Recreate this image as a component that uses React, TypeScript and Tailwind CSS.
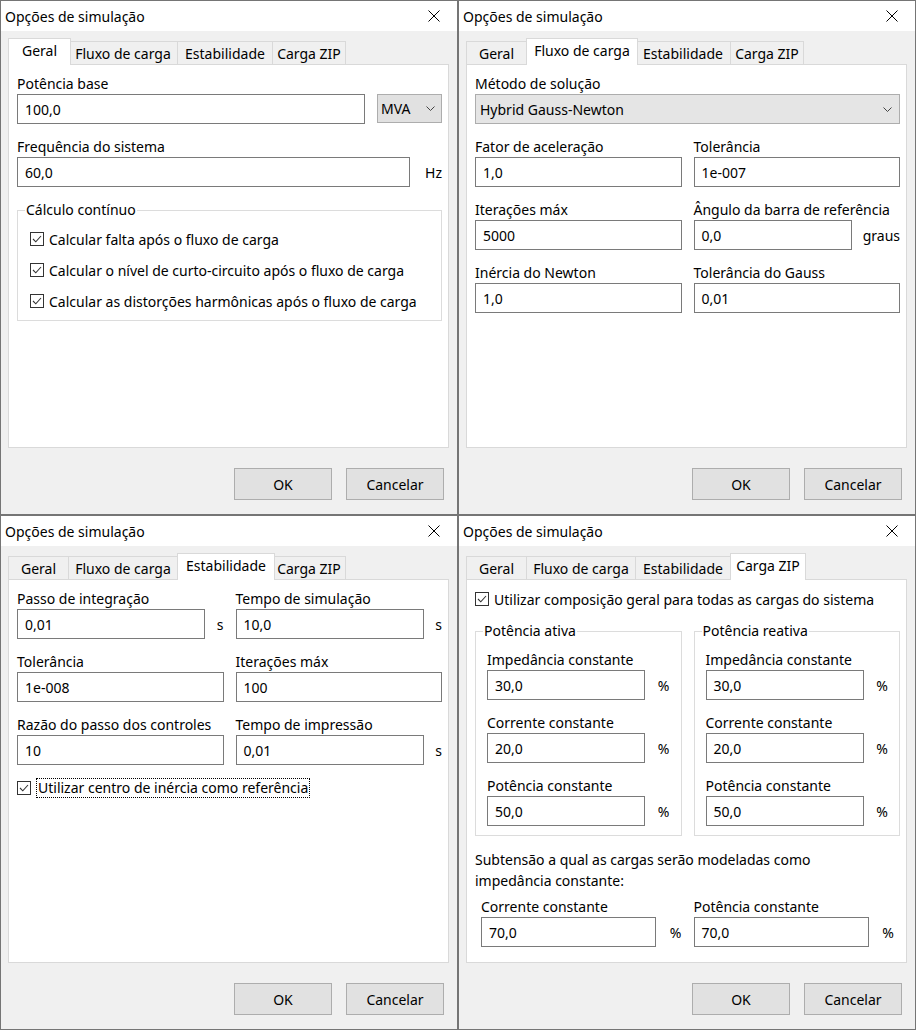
import type { ReactNode } from 'react';

const tabs = [
  { id: 'geral', label: 'Geral', w: 'w-[61px]', wSel: 'w-[63px]' },
  { id: 'fluxo', label: 'Fluxo de carga', w: 'w-[110px]', wSel: 'w-[112px]' },
  { id: 'estab', label: 'Estabilidade', w: 'w-[96px]', wSel: 'w-[98px]' },
  { id: 'zip', label: 'Carga ZIP', w: 'w-[74px]', wSel: 'w-[76px]' },
];

function CloseIcon() {
  return (
    <svg width="12" height="12" viewBox="0 0 12 12" className="block">
      <path d="M0.5 0.5 L11.5 11.5 M11.5 0.5 L0.5 11.5" stroke="#000" strokeWidth="1" fill="none" />
    </svg>
  );
}

function Chevron() {
  return (
    <svg width="9" height="5" viewBox="0 0 9 5" className="block">
      <path d="M0.5 0.5 L4.5 4.5 L8.5 0.5" stroke="#444" strokeWidth="1" fill="none" />
    </svg>
  );
}

function CheckBox({ label, focused = false }: { label: string; focused?: boolean }) {
  return (
    <div className="flex h-[20px] items-center">
      <svg width="14" height="14" viewBox="0 0 14 14" className="block shrink-0">
        <rect x="0.5" y="0.5" width="13" height="13" fill="#fff" stroke="#333" />
        <path d="M3 7 L5.8 9.8 L11 4" stroke="#333" strokeWidth="1.1" fill="none" />
      </svg>
      <span className={focused ? 'ml-[5px] border border-dotted border-black px-[1px] leading-[18px]' : 'ml-[5px]'}>
        {label}
      </span>
    </div>
  );
}

function Input({ value, w }: { value: string; w?: string }) {
  return (
    <div className={`flex h-[30px] items-center border border-[#7a7a7a] bg-white pl-[7px] ${w ?? 'w-full'}`}>
      {value}
    </div>
  );
}

// label on top, box below, optional unit on the right
function Field({ label, value, w, unit }: { label: string; value: string; w?: string; unit?: string }) {
  return (
    <div>
      <div className="h-[20px] leading-[20px]">{label}</div>
      <div className="flex items-center justify-between">
        <Input value={value} w={w} />
        {unit && <span>{unit}</span>}
      </div>
    </div>
  );
}

function Group({ title, children, className }: { title: string; children: ReactNode; className?: string }) {
  return (
    <fieldset className="border border-[#dcdcdc]">
      <legend className="ml-[7px] px-[1px] leading-[20px]">{title}</legend>
      <div className={className}>{children}</div>
    </fieldset>
  );
}

function Window({ tab, children }: { tab: string; children: ReactNode }) {
  return (
    <div className="flex h-[515px] w-[458px] flex-col border border-[#757575] bg-[#f0f0f0]">
      <div className="flex h-[30px] shrink-0 items-center justify-between bg-white pl-[4px]">
        <span>Opções de simulação</span>
        <div className="flex h-[30px] w-[46px] items-center justify-center">
          <CloseIcon />
        </div>
      </div>

      <div className="px-[7px] pt-[7px]">
        {/* Tabs */}
        <div className="flex h-[26px] items-end">
          {tabs.map((t, i) =>
            t.id === tab ? (
              <div
                key={t.id}
                className={`relative z-10 -mb-px -mr-[2px] flex h-[27px] items-start justify-center border border-b-0 border-[#d9d9d9] bg-white pt-[1px] ${t.wSel} ${i > 0 ? '-ml-px' : ''}`}
              >
                {t.label}
              </div>
            ) : (
              <div
                key={t.id}
                className={`flex h-[23px] items-center justify-center border border-b-0 border-[#d9d9d9] bg-[#f0f0f0] pt-[1px] ${t.w} ${i > 0 ? '-ml-px' : ''}`}
              >
                {t.label}
              </div>
            ),
          )}
        </div>
        <div className="h-[384px] w-[441px] border border-[#d9d9d9] bg-white pl-[8px] pr-[6px] pt-[9px]">
          {children}
        </div>
      </div>

      <div className="flex justify-end gap-[14px] pr-[13px] pt-[20px]">
        <div className="flex h-[32px] w-[98px] items-center justify-center border border-[#adadad] bg-[#e1e1e1]">OK</div>
        <div className="flex h-[32px] w-[98px] items-center justify-center border border-[#adadad] bg-[#e1e1e1]">Cancelar</div>
      </div>
    </div>
  );
}

function GeralTab() {
  return (
    <div className="flex flex-col gap-[13px]">
      <div>
        <div className="h-[20px] leading-[20px]">Potência base</div>
        <div className="flex gap-[12px]">
          <Input value="100,0" w="w-[348px]" />
          <div className="flex h-[29px] flex-1 items-center justify-between border border-[#adadad] bg-[#e1e1e1] pl-[3px] pr-[6px]">
            <span>MVA</span>
            <Chevron />
          </div>
        </div>
      </div>
      <Field label="Frequência do sistema" value="60,0" w="w-[393px]" unit="Hz" />
      <Group title="Cálculo contínuo" className="flex flex-col gap-[11px] pb-[9px] pl-[12px] pt-[9px]">
        <CheckBox label="Calcular falta após o fluxo de carga" />
        <CheckBox label="Calcular o nível de curto-circuito após o fluxo de carga" />
        <CheckBox label="Calcular as distorções harmônicas após o fluxo de carga" />
      </Group>
    </div>
  );
}

function FluxoTab() {
  return (
    <div className="flex flex-col gap-[13px]">
      <div>
        <div className="h-[20px] leading-[20px]">Método de solução</div>
        <div className="flex h-[30px] items-center justify-between border border-[#adadad] bg-[#e5e5e5] pl-[4px] pr-[7px]">
          <span>Hybrid Gauss-Newton</span>
          <Chevron />
        </div>
      </div>
      <div className="grid grid-cols-2 gap-x-[12px] gap-y-[13px]">
        <Field label="Fator de aceleração" value="1,0" />
        <Field label="Tolerância" value="1e-007" />
        <Field label="Iterações máx" value="5000" />
        <Field label="Ângulo da barra de referência" value="0,0" w="w-[158px]" unit="graus" />
        <Field label="Inércia do Newton" value="1,0" />
        <Field label="Tolerância do Gauss" value="0,01" />
      </div>
    </div>
  );
}

function EstabTab() {
  return (
    <div className="flex flex-col gap-[13px]">
      <div className="grid grid-cols-2 gap-x-[12px] gap-y-[13px]">
        <Field label="Passo de integração" value="0,01" w="w-[188px]" unit="s" />
        <Field label="Tempo de simulação" value="10,0" w="w-[188px]" unit="s" />
        <Field label="Tolerância" value="1e-008" />
        <Field label="Iterações máx" value="100" />
        <Field label="Razão do passo dos controles" value="10" />
        <Field label="Tempo de impressão" value="0,01" w="w-[188px]" unit="s" />
      </div>
      <CheckBox label="Utilizar centro de inércia como referência" focused />
    </div>
  );
}

function ZipGroup({ title }: { title: string }) {
  return (
    <Group title={title} className="flex flex-col gap-[13px] px-[11px] pb-[9px] pt-[9px]">
      <Field label="Impedância constante" value="30,0" w="w-[158px]" unit="%" />
      <Field label="Corrente constante" value="20,0" w="w-[158px]" unit="%" />
      <Field label="Potência constante" value="50,0" w="w-[158px]" unit="%" />
    </Group>
  );
}

function ZipTab() {
  return (
    <div className="flex flex-col">
      <CheckBox label="Utilizar composição geral para todas as cargas do sistema" />
      <div className="mt-[12px] grid grid-cols-2 gap-x-[12px]">
        <ZipGroup title="Potência ativa" />
        <ZipGroup title="Potência reativa" />
      </div>
      <div className="mt-[13px] leading-[21px]">
        Subtensão a qual as cargas serão modeladas como
        <br />
        impedância constante:
      </div>
      <div className="mt-[6px] grid grid-cols-2 gap-x-[12px] pl-[6px] pr-[6px]">
        <Field label="Corrente constante" value="70,0" w="w-[175px]" unit="%" />
        <Field label="Potência constante" value="70,0" w="w-[175px]" unit="%" />
      </div>
    </div>
  );
}

export default function App() {
  return (
    <div className="grid w-[916px] grid-cols-2 font-['Noto_Sans',sans-serif] text-[14px] text-black">
      <Window tab="geral">
        <GeralTab />
      </Window>
      <Window tab="fluxo">
        <FluxoTab />
      </Window>
      <Window tab="estab">
        <EstabTab />
      </Window>
      <Window tab="zip">
        <ZipTab />
      </Window>
    </div>
  );
}
